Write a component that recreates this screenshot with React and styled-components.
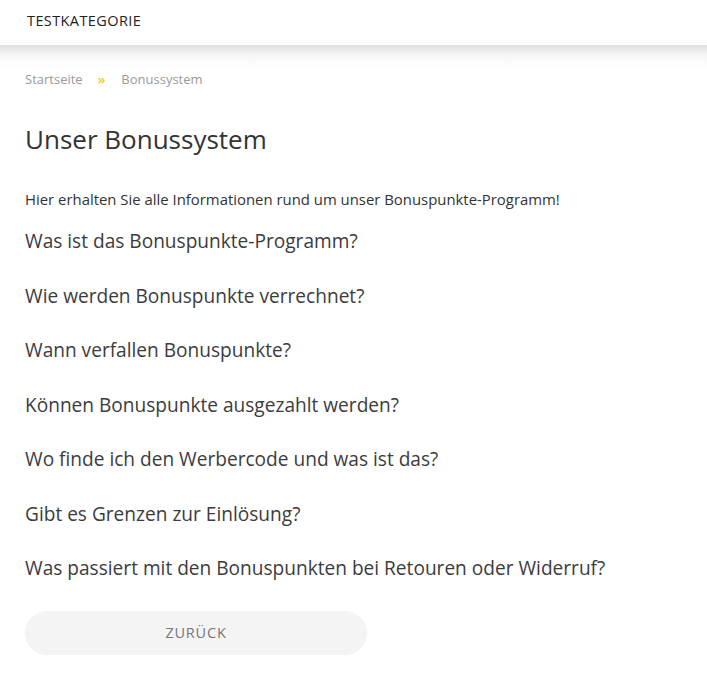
import React from "react";
import styled, { createGlobalStyle } from "styled-components";

const Global = createGlobalStyle`
  html, body { margin: 0; padding: 0; background: #fff; }
  body { font-family: "Open Sans", "Noto Sans", sans-serif; color: #333; }
  * { box-sizing: border-box; }
`;

const Header = styled.header`
  height: 45px;
  display: flex;
  align-items: center;
  padding: 0 27px 4px;
  background: #fff;
  position: relative;
  z-index: 1;
`;

const CategoryLink = styled.span`
  font-size: 14.5px;
  font-weight: 500;
  color: #222;
  letter-spacing: 0.4px;
`;

const Shade = styled.div`
  height: 22px;
  background: linear-gradient(#e0e0e0, #f6f6f6 45%, #fff);
`;

const Main = styled.main`
  padding: 0 25px;
`;

const Breadcrumb = styled.nav`
  display: flex;
  align-items: center;
  font-size: 13px;
  color: #9a9a9a;
  height: 26px;
  margin-top: -1px;
`;

const Crumb = styled.span`
  letter-spacing: 0;
`;

const Sep = styled.span`
  color: #f2d230;
  font-weight: 700;
  margin: 0 16px 0 15px;
  font-size: 12.5px;
`;

const Title = styled.h1`
  margin: 29px 0 0;
  font-size: 26px;
  font-weight: 400;
  color: #333;
  line-height: 36px;
`;

const Intro = styled.p`
  margin: 32px 0 0;
  font-size: 14.9px;
  line-height: 20px;
  color: #333;
  letter-spacing: 0;
`;

const Questions = styled.ul`
  list-style: none;
  margin: 17px 0 0;
  padding: 0;
  display: flex;
  flex-direction: column;
`;

const Question = styled.li`
  font-size: 19.1px;
  line-height: 30px;
  color: #3c3c3c;
  margin-bottom: 24.5px;
`;

const BackButton = styled.button`
  margin-top: 3px;
  width: 342px;
  height: 44px;
  border: none;
  border-radius: 22px;
  background: #f4f4f4;
  color: #777;
  font-family: inherit;
  font-size: 14.5px;
  letter-spacing: 0.8px;
  cursor: pointer;
`;

const questions = [
  "Was ist das Bonuspunkte-Programm?",
  "Wie werden Bonuspunkte verrechnet?",
  "Wann verfallen Bonuspunkte?",
  "Können Bonuspunkte ausgezahlt werden?",
  "Wo finde ich den Werbercode und was ist das?",
  "Gibt es Grenzen zur Einlösung?",
  "Was passiert mit den Bonuspunkten bei Retouren oder Widerruf?",
];

export default function App() {
  return (
    <>
      <Global />
      <Header>
        <CategoryLink>TESTKATEGORIE</CategoryLink>
      </Header>
      <Shade />
      <Main>
        <Breadcrumb>
          <Crumb>Startseite</Crumb>
          <Sep>»</Sep>
          <Crumb>Bonussystem</Crumb>
        </Breadcrumb>
        <Title>Unser Bonussystem</Title>
        <Intro>Hier erhalten Sie alle Informationen rund um unser Bonuspunkte-Programm!</Intro>
        <Questions>
          {questions.map((q) => (
            <Question key={q}>{q}</Question>
          ))}
        </Questions>
        <BackButton>ZURÜCK</BackButton>
      </Main>
    </>
  );
}
